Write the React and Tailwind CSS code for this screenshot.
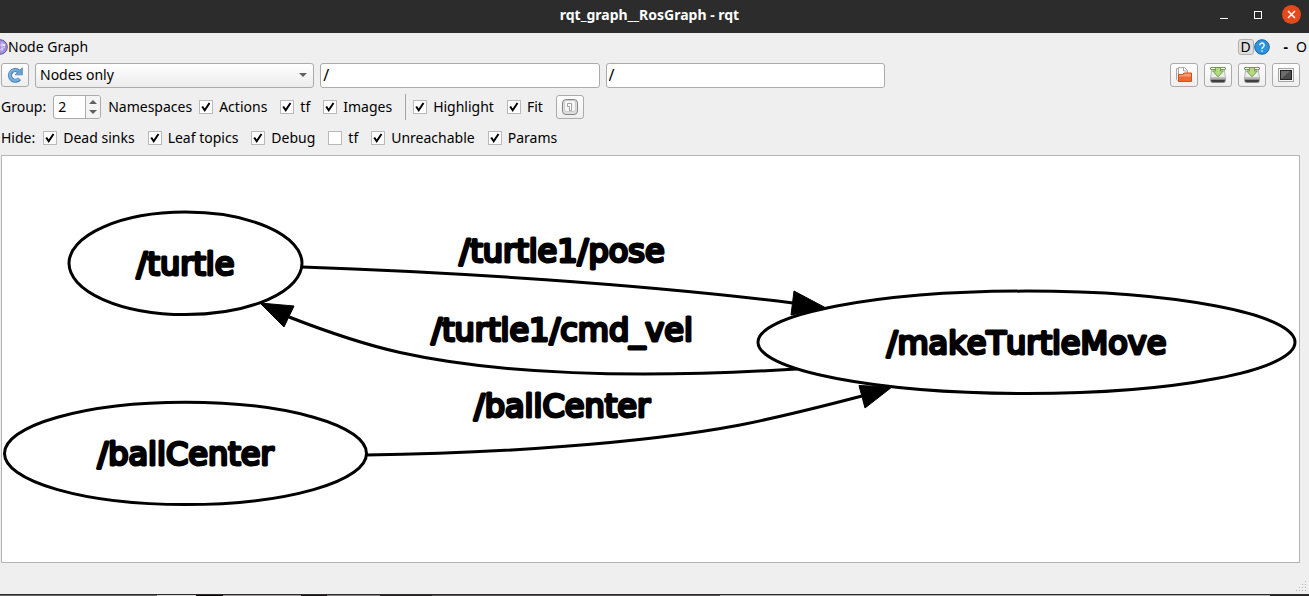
import React from "react";

function Check({ label, on = true }) {
  return (
    <label className="flex items-center gap-1.5 whitespace-nowrap">
      <span className="grid size-3.5 shrink-0">
        <input
          type="checkbox"
          defaultChecked={on}
          className="peer col-start-1 row-start-1 size-3.5 appearance-none border border-[#b9b9b9] bg-white"
        />
        <svg
          viewBox="0 0 14 14"
          aria-hidden="true"
          className="pointer-events-none invisible col-start-1 row-start-1 size-3.5 peer-checked:visible"
        >
          <path d="M3.200 6.500 5.700 10.300 10.500 3" fill="none" stroke="#000" strokeWidth="2" />
        </svg>
      </span>
      {label}
    </label>
  );
}

function ToolButton({ label, children }) {
  return (
    <button
      type="button"
      aria-label={label}
      className="flex h-6 w-7 shrink-0 items-center justify-center rounded-[3px] border border-[#ababab] bg-linear-to-b from-white to-[#eeeeee]"
    >
      {children}
    </button>
  );
}

function FolderIcon() {
  return (
    <svg viewBox="0 0 16 16" className="size-4" aria-hidden="true">
      <path d="M.5 1.500h3v12h-2l-1-1z" fill="#f2f2f2" stroke="#a8a8a8" />
      <path d="M2.500.500h6l3 3v6h-9z" fill="#fff" stroke="#a8a8a8" />
      <path d="M7.500.500v3.500h4" fill="none" stroke="#a8a8a8" />
      <path d="M2.500 14.500v-7h4l1.500-1.500h7.500v8.500z" fill="#ec6a38" stroke="#d0511f" />
      <path d="M3 9.500V8h4l1.500-1.300H15v2.800z" fill="#f59a72" />
    </svg>
  );
}

function SaveIcon() {
  return (
    <svg viewBox="0 0 16 16" className="size-4" aria-hidden="true">
      <path d="M1.800 2.500h12.400l1.300 8.500H.5z" fill="#ececec" stroke="#b8b8b8" />
      <path d="M.5 10.500h15v3q0 2-2 2h-11q-2 0-2-2z" fill="#8c8c8c" stroke="#a0a0a0" />
      <path d="M1 13h14q0 2-1.500 2.300h-11Q1 15 1 13z" fill="#3e3e3e" />
      <path d="M.5 11h15" stroke="#dcdcdc" />
      <rect x="0.5" y="0.5" width="15" height="2" rx="0.500" fill="#fff" stroke="#6d9c50" />
      <path d="M5.500.500h5v3.500h2.800L8 9.800 2.700 4h2.800z" fill="#b4da80" stroke="#6f9f3e" />
    </svg>
  );
}

function ScreenIcon() {
  return (
    <svg viewBox="0 0 16 16" className="size-4" aria-hidden="true">
      <rect x="0.5" y="1.500" width="15" height="13" fill="#f4f4f4" stroke="#a4a4a4" />
      <rect x="2.500" y="3.500" width="11" height="9" fill="#4c4c4c" stroke="#222" />
      <path d="M3 12V4h9z" fill="#6c6c6c" />
    </svg>
  );
}

function RefreshIcon() {
  return (
    <svg viewBox="0 0 16 16" className="size-4" aria-hidden="true">
      <path d="M12.500 11.700A5.300 5.300 0 1 1 11.500 4.200" fill="none" stroke="#4681b8" strokeWidth="4.200" />
      <path d="M15.300.800v7H8z" fill="#6aa3d6" stroke="#4681b8" strokeWidth="0.800" />
      <path d="M12.200 11.500A5.300 5.300 0 1 1 11.500 4.200" fill="none" stroke="#78aedd" strokeWidth="2.400" />
    </svg>
  );
}

function FitIcon() {
  return (
    <svg viewBox="0 0 16 16" className="size-4" aria-hidden="true">
      <rect x="0.5" y="0.5" width="15" height="15" rx="3.500" fill="#dedede" stroke="#858585" />
      <rect x="2.500" y="1.500" width="11" height="11" rx="2" fill="#f6f6f6" stroke="#cccccc" />
      <path d="M5.500 4.500h4v7h-2v-4h-2z" fill="#fff" stroke="#999" strokeWidth="0.900" />
    </svg>
  );
}

const nodes = [
  { name: "/turtle", cx: 185.5, cy: 263.3, rx: 116.5, base: 275 },
  { name: "/ballCenter", cx: 185.5, cy: 453.4, rx: 181, base: 465 },
  { name: "/makeTurtleMove", cx: 1026.5, cy: 342.3, rx: 268.5, base: 354 },
];

const edges = [
  { name: "/turtle1/pose", x: 562, base: 262, d: "M302 267C450 272 640 284 793 303", head: "826,308 794,291 791,315" },
  {
    name: "/turtle1/cmd_vel",
    x: 562,
    base: 341,
    d: "M797 369C665 377 515 378 400 352.500C362 344 325 331 289 317",
    head: "260,303 294,306 284,327",
  },
  {
    name: "/ballCenter",
    x: 562,
    base: 417,
    d: "M366 455C490 453.500 640 444 740 425C780 417 820 407 862 396",
    head: "892,387 859,385.500 865,408",
  },
];

function Graph() {
  return (
    <svg
      viewBox="2 156 1297 406"
      role="img"
      aria-label="ROS node graph"
      className="block w-full [font-kerning:none]"
      stroke="#000"
      strokeWidth="3"
      strokeLinejoin="round"
      fontFamily='"DejaVu Sans", sans-serif'
      fontSize="32"
      textAnchor="middle"
    >
      {nodes.map((n) => (
        <g key={n.name}>
          <ellipse cx={n.cx} cy={n.cy} rx={n.rx} ry="51.200" fill="#fff" />
          <text x={n.cx} y={n.base}>{n.name}</text>
        </g>
      ))}
      {edges.map((e) => (
        <g key={e.name}>
          <path d={e.d} fill="none" />
          <polygon points={e.head} strokeWidth="1" />
          <text x={e.x} y={e.base}>{e.name}</text>
        </g>
      ))}
    </svg>
  );
}

const field = "h-[25px] w-full min-w-0 rounded-[3px] border border-[#ababab]";

export default function App() {
  return (
    <div className="flex min-h-screen flex-col bg-[#efefef] font-['Noto_Sans',sans-serif] text-sm leading-5 text-black">
      <header className="flex h-[33px] items-center bg-[#2c2c2c] text-white">
        <div className="w-[92px]" />
        <h1 className="flex-1 pb-1 text-center font-bold">rqt_graph__RosGraph - rqt</h1>
        <div className="flex w-[102px] items-center justify-end gap-4 pr-2 pb-1">
          <button type="button" aria-label="Minimize" className="mr-0.5 grid size-4 place-items-center">
            <svg viewBox="0 0 16 16" className="size-4"><path d="M4 11.500h8" stroke="#fff" /></svg>
          </button>
          <button type="button" aria-label="Maximize" className="grid size-4 place-items-center">
            <svg viewBox="0 0 16 16" className="size-4"><rect x="4.500" y="4.500" width="7" height="7" fill="none" stroke="#fff" /></svg>
          </button>
          <button type="button" aria-label="Close" className="grid size-[19px] place-items-center rounded-full bg-[#e3491a]">
            <svg viewBox="0 0 19 19" className="size-[19px]"><path d="m6 6 7 7M13 6l-7 7" stroke="#fff" strokeWidth="1.500" /></svg>
          </button>
        </div>
      </header>

      <div className="flex h-7 items-center">
        <svg viewBox="0 0 8 16" className="h-4 w-2" aria-hidden="true">
          <circle cx="0" cy="8" r="7.300" fill="#a58fe0" stroke="#62548f" />
          <path d="M0 6h4M2 3v9M0 11l5-3" stroke="#e2d9fb" fill="none" />
          <circle cx="4" cy="6" r="1.200" fill="#f3eeff" />
        </svg>
        <h2 className="flex-1">Node Graph</h2>
        <button type="button" className="flex size-4 items-center justify-center rounded-[3px] border border-[#b0b0b0] bg-[#dedede]">D</button>
        <button type="button" aria-label="Help" className="size-4">
          <svg viewBox="0 0 16 16" className="size-4">
            <circle cx="8" cy="8" r="7.300" fill="#2c93de" stroke="#1d6299" />
            <path d="M5.800 6.200a2.200 2.200 0 1 1 3.300 1.900Q8 8.700 8 10M8 11.200v1.600" fill="none" stroke="#fff" strokeWidth="1.400" />
          </svg>
        </button>
        <button type="button" className="ml-3.5 font-bold">-</button>
        <button type="button" className="ml-2 pr-0.5">O</button>
      </div>

      <div className="mb-0.5 flex h-7 items-center gap-1.5 pr-[9px] pl-px">
        <ToolButton label="Refresh"><RefreshIcon /></ToolButton>
        <div className="-mr-1.5 grid flex-1 grid-cols-4 gap-1.5">
          <div className={`${field} grid bg-linear-to-b from-white to-[#ececec]`}>
            <select aria-label="Graph type" className="col-start-1 row-start-1 w-full appearance-none px-1">
              <option>Nodes only</option>
            </select>
            <svg viewBox="0 0 8 4" className="pointer-events-none col-start-1 row-start-1 mr-1.5 h-1 w-2 self-center justify-self-end">
              <path d="M0 0h8L4 4z" fill="#606060" />
            </svg>
          </div>
          <input aria-label="Node filter" defaultValue="/" className={`${field} bg-white px-0.5 text-base`} />
          <input aria-label="Topic filter" defaultValue="/" className={`${field} bg-white px-0.5 text-base`} />
        </div>
        <ToolButton label="Load graph"><FolderIcon /></ToolButton>
        <ToolButton label="Save as DOT"><SaveIcon /></ToolButton>
        <ToolButton label="Save as SVG"><SaveIcon /></ToolButton>
        <ToolButton label="Save as image"><ScreenIcon /></ToolButton>
      </div>

      <div className="flex h-8 items-center gap-[13px] pl-px">
        <div className="flex items-center gap-[7px]">
          <label htmlFor="group">Group:</label>
          <div className="flex h-6 w-12 overflow-hidden rounded-[3px] border border-[#ababab] bg-white">
            <input id="group" defaultValue="2" className="w-8 min-w-0 border-r border-[#ababab] pl-1" />
            <div className="flex flex-1 flex-col items-center justify-center gap-1.5 bg-[#f4f4f4]">
              <button type="button" aria-label="Increase"><svg viewBox="0 0 8 4" className="block h-1 w-2"><path d="M0 4h8L4 0z" fill="#606060" /></svg></button>
              <button type="button" aria-label="Decrease"><svg viewBox="0 0 8 4" className="block h-1 w-2"><path d="M0 0h8L4 4z" fill="#606060" /></svg></button>
            </div>
          </div>
          <span>Namespaces</span>
          <Check label="Actions" />
        </div>
        <Check label="tf" />
        <Check label="Images" />
        <div className="flex items-center gap-[7px]">
          <div className="h-[26px] w-px bg-[#a5a5a5]" />
          <Check label="Highlight" />
        </div>
        <Check label="Fit" />
        <ToolButton label="Fit in view"><FitIcon /></ToolButton>
      </div>

      <div className="mb-0.5 flex h-[30px] items-center gap-[13px] pl-px">
        <div className="flex items-center gap-2">
          <span>Hide:</span>
          <Check label="Dead sinks" />
        </div>
        <Check label="Leaf topics" />
        <Check label="Debug" />
        <Check label="tf" on={false} />
        <Check label="Unreachable" />
        <Check label="Params" />
      </div>

      <main className="mr-[9px] ml-px border border-[#b4b4b4] bg-white">
        <Graph />
      </main>

      <footer className="flex min-h-[31px] flex-1 items-end justify-end pr-0.5 pb-0.5">
        <svg viewBox="0 0 11 11" className="size-[11px]" aria-hidden="true" fill="#b4b4b4">
          <path d="M9 0h1v1H9zM6 3h1v1H6zM9 3h1v1H9zM3 6h1v1H3zM6 6h1v1H6zM9 6h1v1H9zM0 9h1v1H0zM3 9h1v1H3zM6 9h1v1H6zM9 9h1v1H9z" />
        </svg>
      </footer>
      <div className="h-px bg-[#2c2c2c]" />
      <div className="flex h-px bg-[#b0b0b0]">
        <div className="w-[12%] bg-[#686868]" />
        <div className="w-[3%] bg-[#d8d8d8]" />
        <div className="w-[2%] bg-[#0c0608]" />
        <div className="w-[6%] bg-[#a09a9c]" />
        <div className="w-[2%] bg-[#1c1012]" />
        <div className="w-[4%] bg-[#8a8486]" />
        <div className="w-[4%] bg-[#2c2628]" />
        <div className="w-[22%] bg-[#5a5658]" />
        <div className="flex-1" />
        <div className="w-[3%] bg-[#2a282a]" />
      </div>
    </div>
  );
}
